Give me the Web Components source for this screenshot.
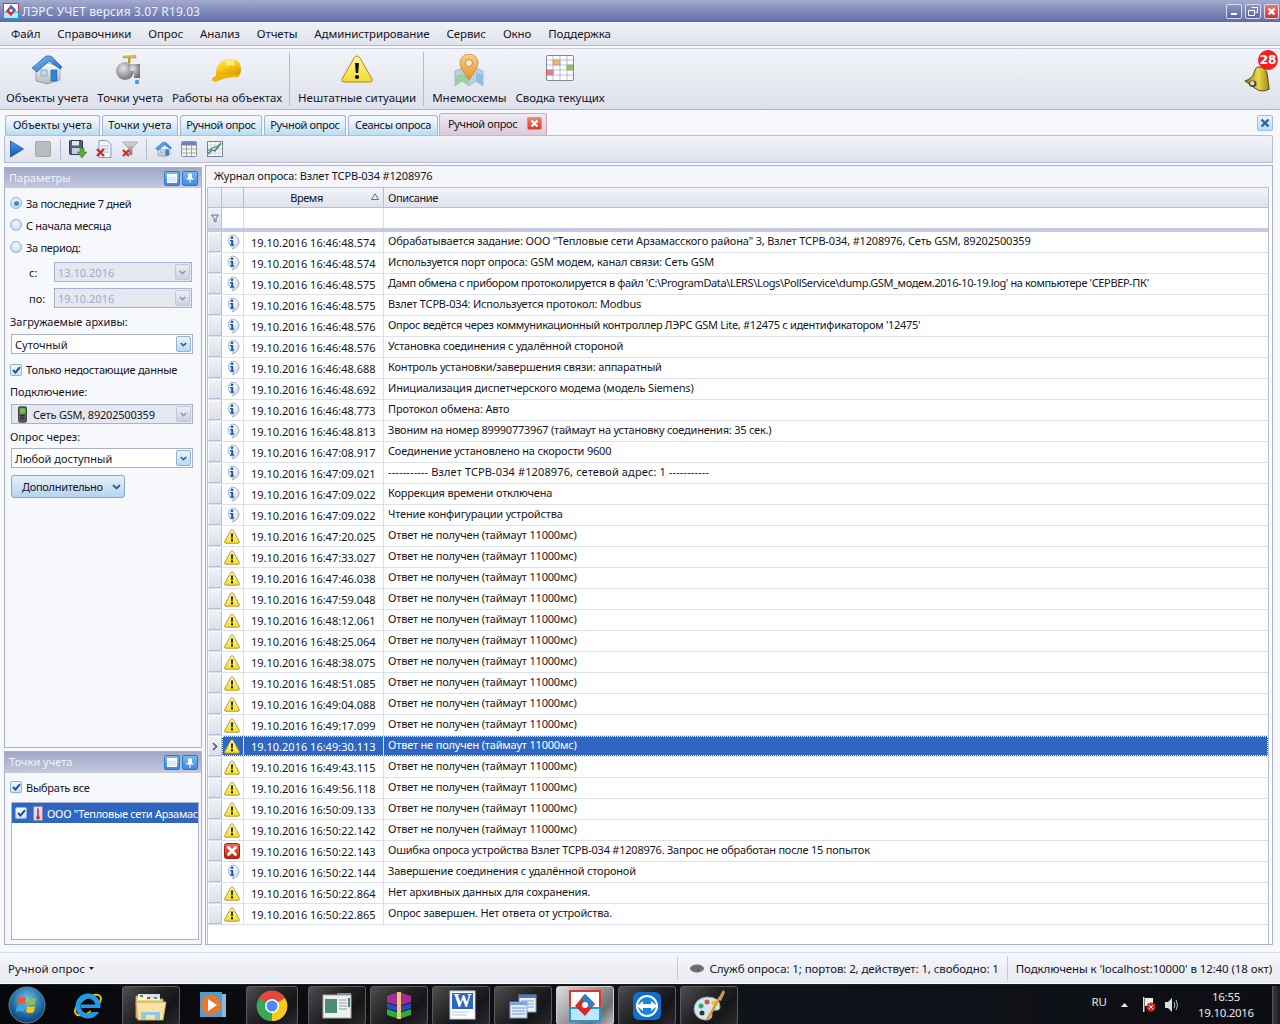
<!DOCTYPE html>
<html lang="ru">
<head>
<meta charset="utf-8">
<title>ЛЭРС УЧЕТ</title>
<style>
  html, body { margin: 0; padding: 0; background: #f7f8fc; }
  body { width: 1280px; height: 1024px; overflow: hidden; font: 11px "Noto Sans", sans-serif; color: #15151f; }
</style>
</head>
<body>
<app-window>
  <title-bar>ЛЭРС УЧЕТ версия 3.07 R19.03</title-bar>
  <menu-bar items="Файл|Справочники|Опрос|Анализ|Отчеты|Администрирование|Сервис|Окно|Поддержка"></menu-bar>
  <ribbon-bar></ribbon-bar>
  <tab-strip></tab-strip>
  <work-area>
    <params-panel></params-panel>
    <log-grid></log-grid>
  </work-area>
  <status-bar></status-bar>
  <task-bar></task-bar>
</app-window>

<script>
// icons, all hand drawn, size is set by the caller
const svg = (w, h, vb, body) => `<svg width="${w}" height="${h}" viewBox="0 0 ${vb}" style="display:block;flex:none">${body}</svg>`;

const icons = {
  house: (s = 32) => svg(s, s, '32 32', `
    <defs><linearGradient id="hw" x1="0" y1="0" x2="0" y2="1"><stop offset="0" stop-color="#fff"/><stop offset="1" stop-color="#b4b8bf"/></linearGradient>
    <linearGradient id="hr" x1="0" y1="0" x2="1" y2="1"><stop offset="0" stop-color="#7cc0f4"/><stop offset="1" stop-color="#1b66c4"/></linearGradient></defs>
    <path d="M5 14 L5 27 L16 30 L29 26 L29 13 L17 9 Z" fill="url(#hw)" stroke="#8a8f98" stroke-width=".7"/>
    <path d="M1 14 L15 2 L20 2 L31 13 L29 15 L18 7 L6 18 Z" fill="url(#hr)" stroke="#1f5fae" stroke-width=".7"/>
    <rect x="20" y="16" width="6" height="11" fill="#2a86d6" stroke="#1a5ea8" stroke-width=".6"/>
    <rect x="10" y="16" width="6" height="6" fill="#bcd9ee" stroke="#6f8fa8" stroke-width=".6"/>`),
  tap: () => svg(32, 32, '32 32', `
    <defs><radialGradient id="tp" cx=".4" cy=".35" r=".7"><stop offset="0" stop-color="#e4e4ea"/><stop offset="1" stop-color="#6e6e78"/></radialGradient></defs>
    <circle cx="11" cy="17" r="9" fill="url(#tp)"/>
    <path d="M14 10 H26 V24 H20 V17 H14Z" fill="url(#tp)"/>
    <rect x="14" y="3" width="2.500" height="6" fill="#b9a040"/><path d="M9 2 L22 1.500 L22 4 L9 4Z" fill="#d9c24a" stroke="#9b8528" stroke-width=".4"/>
    <circle cx="23" cy="28" r="2.200" fill="#3a9bf0"/>`),
  helmet: () => svg(32, 32, '32 32', `
    <defs><linearGradient id="hl" x1="0" y1="0" x2=".5" y2="1"><stop offset="0" stop-color="#ffec78"/><stop offset=".55" stop-color="#f8cb14"/><stop offset="1" stop-color="#e09f04"/></linearGradient></defs>
    <path d="M5 22 Q4 6 19 5 Q30 5 30 16 Q30 20 27 22 Q15 20 5 22Z" fill="url(#hl)"/>
    <path d="M1 26 Q1 23 5 22 Q15 19 27 21 Q30 22 27 23 Q15 23 7 27 Q2 29 1 26Z" fill="#eeb40a"/>
    <path d="M14 7 Q19 5 23 6 L24 12 Q19 10 15 12Z" fill="#fff09a" opacity=".8"/>`),
  warnBig: () => svg(32, 32, '32 32', `
    <defs><linearGradient id="wb" x1="0" y1="0" x2="0" y2="1"><stop offset="0" stop-color="#fff7a0"/><stop offset="1" stop-color="#f4d92e"/></linearGradient></defs>
    <path d="M16 2 Q18 2 19 4 L31 25 Q32 28 29 28 L3 28 Q0 28 1 25 L13 4 Q14 2 16 2Z" fill="url(#wb)" stroke="#b08a1a" stroke-width="1"/>
    <path d="M14 9 h4 l-.8 10 h-2.400z" fill="#111"/><circle cx="16" cy="23" r="2.100" fill="#111"/>`),
  map: () => svg(32, 32, '32 32', `
    <path d="M2 17 L9 14 L16 18 L23 14 L30 17 L30 32 L23 27 L16 32 L9 27 L2 32 Z" fill="#b9d2e6" stroke="#8aa3b8" stroke-width=".6"/>
    <path d="M2 23 L9 20 L16 24 L16 32 L9 27 L2 32Z" fill="#9fcf9a"/><path d="M23 18 L30 21 L30 32 L23 27Z" fill="#8fbfe0"/>
    <defs><linearGradient id="pn" x1="0" y1="0" x2="0" y2="1"><stop offset="0" stop-color="#fbd08a"/><stop offset="1" stop-color="#e8912c"/></linearGradient></defs>
    <path d="M16 26 Q7 14 7 9 A9 9 0 0 1 25 9 Q25 14 16 26Z" fill="url(#pn)" stroke="#c87c24" stroke-width=".7"/>
    <circle cx="16" cy="9" r="3.500" fill="#f3eee0" stroke="#b8802c" stroke-width=".8"/>`),
  sheet: () => svg(30, 30, '30 30', `
    <rect x="1.500" y="1.500" width="27" height="25" rx="1.500" fill="#fff" stroke="#7d86a8"/>
    <rect x="8" y="6" width="7" height="5" fill="#f2bb63" stroke="#c98d38" stroke-width=".6"/>
    <rect x="22" y="11" width="6.500" height="5" fill="#93c650" stroke="#6d9c34" stroke-width=".6"/>
    <rect x="1.500" y="16" width="7" height="5" fill="#ec7a70" stroke="#c8554a" stroke-width=".6"/>
    <path d="M8 2V26M15 2V26M22 2V26M2 6H28M2 11H28M2 16H28M2 21H28" stroke="#a5abcb" stroke-width=".8" fill="none"/>`),
  bell: () => svg(28, 30, '30 30', `
    <defs><linearGradient id="bl" x1="0" y1="0" x2="1" y2="0"><stop offset="0" stop-color="#8a7410"/><stop offset=".55" stop-color="#ecd84a"/><stop offset="1" stop-color="#a08a18"/></linearGradient></defs>
    <path d="M16 2 Q25 2 26 10 L28 26 Q20 30 13 25 L2 17 Q10 15 12 8 Q13 3 16 2Z" fill="url(#bl)" stroke="#4e4208" stroke-width="1"/>
    <ellipse cx="10.500" cy="20" rx="4" ry="3.500" fill="#444"/><circle cx="10" cy="19.500" r="2.300" fill="#ddd"/>`),
  play: () => svg(16, 18, '16 18', `
    <defs><linearGradient id="pl" x1="0" y1="0" x2="0" y2="1"><stop offset="0" stop-color="#46a2ea"/><stop offset="1" stop-color="#1156b8"/></linearGradient></defs>
    <path d="M1.500 1 L14.500 9 L1.500 17Z" fill="url(#pl)" stroke="#164f9c" stroke-width=".8"/>`),
  stop: () => svg(16, 16, '16 16', `<rect x=".5" y=".5" width="15" height="15" rx="1.500" fill="#bbbcc2" stroke="#a2a3ab"/>`),
  save: () => svg(18, 18, '18 18', `
    <rect x=".5" y=".5" width="13" height="14" rx="1" fill="#4f6079" stroke="#2f3a4e"/><rect x="3" y="1" width="7" height="4.500" fill="#dfe4ee"/><rect x="3" y="8" width="8" height="6" fill="#c8cedc"/>
    <path d="M11 8 h4 v4 h3 l-5 6 l-5 -6 h3z" fill="#57ae3c" stroke="#34802a" stroke-width=".6"/>`),
  docx: () => svg(16, 18, '16 18', `
    <path d="M3 .5 H11 L15 4.500 V17.500 H3Z" fill="#f3f5fb" stroke="#8b97b8"/><path d="M5 6H13M5 9H13M5 12H13" stroke="#a9b7d3"/>
    <path d="M1 9 L8 16 M8 9 L1 16" stroke="#d42a1e" stroke-width="2.400"/>`),
  funnelx: () => svg(16, 18, '16 18', `
    <defs><linearGradient id="fn" x1="0" y1="0" x2="0" y2="1"><stop offset="0" stop-color="#dedede"/><stop offset="1" stop-color="#787878"/></linearGradient></defs>
    <path d="M.5 2 H15.500 L10 8.500 V15 L7 14 V8.500Z" fill="url(#fn)" stroke="#777" stroke-width=".5"/>
    <path d="M1 10 L7 16 M7 10 L1 16" stroke="#d42a1e" stroke-width="2.200"/>`),
  table: () => svg(16, 16, '16 16', `
    <rect x=".5" y=".5" width="15" height="15" rx="1" fill="#f4f4f2" stroke="#8c92a8"/><rect x="1" y="1" width="14" height="3.500" fill="#6f84b8"/>
    <path d="M1 8H15M1 12H15M5.500 4V15M10.500 4V15" stroke="#a9a79a" fill="none"/>`),
  chart: () => svg(16, 16, '16 16', `
    <rect x=".5" y=".5" width="15" height="15" fill="#fdfdf8" stroke="#7a8094"/><path d="M4 1V15M8 1V15M12 1V15M1 4H15M1 8H15M1 12H15" stroke="#c3c6cc" stroke-width=".7"/>
    <path d="M1 13 L5 9 L8 10 L14 2" stroke="#2f66c2" stroke-width="1.300" fill="none"/><path d="M1 10 L5 7 L9 6 L14 3" stroke="#3ca83c" stroke-width="1.300" fill="none"/>`),
  info: () => svg(16, 16, '16 16', `
    <defs><radialGradient id="inf" cx=".4" cy=".3" r=".8"><stop offset="0" stop-color="#fff"/><stop offset="1" stop-color="#c5d2e4"/></radialGradient></defs>
    <path d="M8 1 A7 6.500 0 0 1 14 11 Q12 14 8 15 Q10 13.500 9.500 13 A7 6.500 0 0 1 8 1Z" fill="url(#inf)" stroke="#98a8bf" stroke-width=".8"/>
    <circle cx="8" cy="3.800" r="1.400" fill="#1b57b0"/><path d="M6 6 h3.200 v4.500 h1 v1.300 h-4 v-1.300 h1 v-3.200 h-1.200z" fill="#1b57b0"/>`),
  warn: () => svg(16, 15, '16 15', `
    <defs><linearGradient id="wn" x1="0" y1="0" x2="0" y2="1"><stop offset="0" stop-color="#fff9b0"/><stop offset="1" stop-color="#f6e020"/></linearGradient></defs>
    <path d="M8 .8 Q8.800 .8 9.300 1.700 L15.300 12.500 Q15.800 14 14.300 14.200 L1.700 14.200 Q.2 14 .7 12.500 L6.700 1.700 Q7.200 .8 8 .8Z" fill="url(#wn)" stroke="#a98c30" stroke-width=".9"/>
    <path d="M7 4.500 h2 l-.4 5 h-1.200z" fill="#111"/><rect x="7" y="10.300" width="2" height="2" fill="#111"/>`),
  error: () => svg(16, 16, '16 16', `
    <defs><linearGradient id="er" x1="0" y1="0" x2="0" y2="1"><stop offset="0" stop-color="#f2725a"/><stop offset="1" stop-color="#c01c10"/></linearGradient></defs>
    <rect x=".5" y=".5" width="15" height="15" rx="2" fill="url(#er)" stroke="#a62015"/>
    <path d="M4.500 4.500 L11.500 11.500 M11.500 4.500 L4.500 11.500" stroke="#fff" stroke-width="2.800" stroke-linecap="round"/>`),
  thermo: () => svg(10, 17, '12 18', `
    <rect x=".5" y=".5" width="11" height="17" fill="#d8dcec" stroke="#7d86a8"/><rect x="5" y="3" width="2" height="10" fill="#d03028"/><circle cx="6" cy="14" r="2.200" fill="#d03028"/>`),
  phone: () => svg(9, 17, '10 18', `
    <rect x=".5" y=".5" width="9" height="17" rx="1.500" fill="#5d5f60" stroke="#333"/><rect x="2" y="2" width="6" height="6" fill="#68c43c"/><path d="M2.500 10H7.500M2.500 12H7.500M2.500 14H7.500" stroke="#222"/>`),
  logo: (s = 16) => svg(s, s, '16 16', `
    <rect x=".5" y=".5" width="15" height="15" fill="#fff" stroke="#e03530"/><rect x="1" y="9" width="14" height="6" fill="#bfe6f7"/><rect x=".5" y="9" width="15" height="6.500" fill="none" stroke="#1e9ad6"/>
    <path d="M8 2 L13 7 L8 13 L3 8Z" fill="#d22a26"/><path d="M8 2 L13 7 L10.500 9 L6 4Z" fill="#2f7fd0"/><circle cx="8" cy="7.500" r="1.500" fill="#fff"/>`)
};

class Base extends HTMLElement {
  mount(css, html) {
    this.attachShadow({ mode: 'open' });
    this.shadowRoot.innerHTML = `<style>${css}</style>${html}`;
  }
}

customElements.define('app-window', class extends Base {
  constructor() {
    super();
    this.mount(`:host { display:flex; flex-direction:column; width:1280px; height:1024px; background:#f7f8fc; }`, `<slot></slot>`);
  }
});

customElements.define('title-bar', class extends Base {
  constructor() {
    super();
    this.mount(`
      :host { display:flex; align-items:center; height:22px; flex:none; padding-left:3px; color:#eef0f8; font-size:12px;
              background:linear-gradient(#a3abcf,#5e6ba6); }
      .txt { margin-left:3px; letter-spacing:.1px; }
      .btns { margin-left:auto; display:flex; gap:3px; margin-right:1px; }
      .b { width:14px; height:13px; border:1px solid #d6daea; border-radius:2px; background:linear-gradient(#8b96c2,#5a68a3); display:flex; align-items:center; justify-content:center; }
      .x { background:linear-gradient(#f0786c,#d43028); width:13px; }`,
      `${icons.logo(16)}<span class="txt"><slot></slot></span>
      <div class="btns">
        <div class="b">${svg(8, 8, '8 8', '<rect x="1" y="6" width="6" height="2" fill="#fff"/>')}</div>
        <div class="b">${svg(10, 9, '10 9', '<path d="M3.500 .5h6v5h-2M.5 3.500h6v5h-6z" fill="none" stroke="#fff"/>')}</div>
        <div class="b x">${svg(9, 9, '9 9', '<path d="M1.500 1.500L7.500 7.500M7.500 1.500L1.500 7.500" stroke="#fff" stroke-width="2.400"/>')}</div>
      </div>`);
  }
});

customElements.define('menu-bar', class extends Base {
  connectedCallback() {
    if (this.shadowRoot) return;
    const items = this.getAttribute('items').split('|').map(t => `<span>${t}</span>`).join('');
    this.mount(`
      :host { display:flex; align-items:center; height:23px; padding-bottom:0; flex:none; gap:17px; padding-left:11px; margin-bottom:2px; font-size:11.5px; letter-spacing:-.1px;
              background:linear-gradient(#f1f2f7,#e0e3ee); border-bottom:1px solid #aeb4d2; }`, items);
  }
});

customElements.define('ribbon-btn', class extends Base {
  constructor() {
    super();
    this.mount(`
      :host { display:flex; flex-direction:column; align-items:center; white-space:nowrap; font-size:11.5px; }
      .ic { height:34px; margin-top:4px; display:flex; align-items:flex-start; }
      .t { margin-top:2px; line-height:16px; }`,
      `<div class="ic"><slot name="icon"></slot></div><div class="t"><slot></slot></div>`);
  }
});

customElements.define('ribbon-bar', class extends Base {
  constructor() {
    super();
    const btn = (ic, t) => `<ribbon-btn><span slot="icon">${ic}</span>${t}</ribbon-btn>`;
    this.mount(`
      :host { position:relative; display:flex; flex:none; gap:9px; padding:1px 0 0 6px; box-sizing:border-box; height:62px; letter-spacing:-.04px;
              background:linear-gradient(#f3f4f9,#dee1ec); border-top:1px solid #c6cbe0; border-bottom:1px solid #aeb4d2; }
      .sep { width:1px; margin:2px -1px 3px -2px; background:#b4bad5; }
      .bell { position:absolute; right:9px; top:15px; }
      .badge { position:absolute; right:2px; top:1px; width:20px; height:20px; border-radius:50%; background:#f4201c; color:#fff;
               font:bold 12px/20px "DejaVu Sans",sans-serif; text-align:center; }`,
      btn(icons.house(), 'Объекты учета') + btn(icons.tap(), 'Точки учета') + btn(icons.helmet(), 'Работы на объектах') +
      `<div class="sep"></div>` + btn(icons.warnBig(), 'Нештатные ситуации') +
      `<div class="sep"></div>` + btn(icons.map(), 'Мнемосхемы') + btn(icons.sheet(), 'Сводка текущих') +
      `<div class="bell">${icons.bell()}</div><div class="badge">28</div>`);
  }
});

customElements.define('tab-strip', class extends Base {
  constructor() {
    super();
    const tabs = [['Объекты учета', 95, 0], ['Точки учета', 76, 0], ['Ручной опрос', 82, -.35], ['Ручной опрос', 82, -.35], ['Сеансы опроса', 90, -.35]];
    this.mount(`
      :host { display:flex; align-items:flex-end; height:25px; flex:none; padding-left:5px; gap:2px; background:#f7f8fc; white-space:nowrap; }
      .tab { height:20px; padding-bottom:3px; box-sizing:border-box; display:flex; align-items:center; justify-content:center; border:1px solid #a9b0d0; border-bottom:0; border-radius:3px 3px 0 0;
             background:linear-gradient(#f6f9fe 0,#e3f0fb 40%,#b9dcf5 100%); }
      .on { height:22px; padding-bottom:2px; margin-left:-1px; width:108px; justify-content:flex-start; padding-left:8px; background:linear-gradient(#f0e9f2,#dcc9dd); border-color:#cfa8c8; gap:10px; letter-spacing:-.35px; }
      .cl { width:15px; height:13px; border-radius:2px; background:linear-gradient(#f2826e,#e2342a); border:1px solid #e88; box-sizing:border-box; display:flex; align-items:center; justify-content:center; }
      .close { margin:0 7px 4px auto; width:16px; height:16px; box-sizing:border-box; border:1px solid #9cc0e4; border-radius:2px; background:linear-gradient(#eaf4fd,#b9dcf5); display:flex; align-items:center; justify-content:center; }`,
      tabs.map(([t, w, ls]) => `<div class="tab" style="width:${w}px;letter-spacing:${ls}px">${t}</div>`).join('') +
      `<div class="tab on">Ручной опрос<span class="cl">${svg(9, 9, '9 9', '<path d="M1.500 1.500L7.500 7.500M7.500 1.500L1.500 7.500" stroke="#fff" stroke-width="2.200"/>')}</span></div>
       <div class="close">${svg(10, 10, '10 10', '<path d="M1.500 1.500L8.500 8.500M8.500 1.500L1.500 8.500" stroke="#2a62a8" stroke-width="2.400"/>')}</div>`);
  }
});

customElements.define('work-area', class extends Base {
  constructor() {
    super();
    const ic = i => `<span class="i">${i}</span>`;
    this.mount(`
      :host { flex:1; min-height:0; display:flex; flex-direction:column; padding:0 7px 7px 4px; background:#f7f8fc; border-bottom:1px solid #d8dbe8; }
      .tools { display:flex; align-items:center; height:28px; box-sizing:border-box; flex:none; padding-left:0; border:1px solid #b7bdd8; border-radius:2px 2px 0 0; background:linear-gradient(#f1f2f8,#dfe2ed); margin-bottom:2px; }
      .i { width:26px; display:flex; justify-content:center; flex:none; }
      .i:first-child { margin-left:-1px; }
      .s { width:1px; height:21px; background:#b4bad5; margin:0 4px; flex:none; }
      .s2 { margin:0 3px; }
      .body { flex:1; min-height:0; display:flex; gap:3px; }`,
      `<div class="tools">${ic(icons.play())}${ic(icons.stop())}<span class="s"></span>${ic(icons.save())}${ic(icons.docx())}${ic(icons.funnelx())}<span class="s s2"></span>${ic(icons.house(17))}${ic(icons.table())}${ic(icons.chart())}</div>
       <div class="body"><slot></slot></div>`);
  }
});

customElements.define('dock-head', class extends Base {
  constructor() {
    super();
    this.mount(`
      :host { display:flex; align-items:center; height:20px; flex:none; padding-left:4px; color:#f2f3f9; font-size:11px; background:linear-gradient(#9fa7c8,#c4c9de); }
      .t { padding-bottom:2px; }
      .bs { margin-left:auto; display:flex; gap:2px; margin-right:3px; }
      .b { width:16px; height:15px; box-sizing:border-box; border:1px solid #2c78c8; border-radius:2px; background:linear-gradient(#7cb8ee,#3c8ade); display:flex; align-items:center; justify-content:center; }`,
      `<span class="t"><slot></slot></span><div class="bs">
        <div class="b">${svg(10, 9, '10 9', '<rect x=".5" y=".5" width="9" height="8" fill="#dcebfa" stroke="#fff"/><rect x="1" y="1" width="8" height="1.500" fill="#fff"/>')}</div>
        <div class="b">${svg(8, 10, '8 10', '<path d="M2 .5H6V5H7.500V6.500H4.500V10H3.500V6.500H.5V5H2Z" fill="#fff"/>')}</div></div>`);
  }
});

customElements.define('check-box', class extends Base {
  constructor() {
    super();
    this.mount(`
      :host { display:flex; align-items:center; gap:4px; white-space:nowrap; letter-spacing:-.25px; }
      .c { width:10px; height:10px; border:1px solid #8fb3d8; border-radius:2px; background:linear-gradient(#f3f8fd,#cfe2f4); flex:none; display:flex; align-items:center; justify-content:center; }`,
      `<span class="c">${svg(9, 8, '9 8', '<path d="M1 4 L3.500 6.500 L8 1.200" fill="none" stroke="#1f4f9c" stroke-width="2"/>')}</span><slot></slot>`);
  }
});

customElements.define('radio-opt', class extends Base {
  constructor() {
    super();
    this.mount(`
      :host { display:flex; align-items:center; gap:4px; white-space:nowrap; padding-left:5px; height:22px; letter-spacing:-.3px; }
      .r { width:10px; height:10px; border-radius:50%; border:1px solid #8fb3d8; background:radial-gradient(circle at 50% 35%,#f3f8fd,#b7d3ee); flex:none; display:flex; align-items:center; justify-content:center; }
      .d { width:5px; height:5px; border-radius:50%; background:#4d87c7; display:none; }
      :host([checked]) .d { display:block; }`,
      `<span class="r"><span class="d"></span></span><slot></slot>`);
  }
});

customElements.define('combo-box', class extends Base {
  constructor() {
    super();
    this.mount(`
      :host { display:flex; align-items:center; height:20px; box-sizing:border-box; border:1px solid #a9b0d0; background:#fff; padding-left:3px; margin-left:11px; margin-right:9px; gap:6px; }
      :host([disabled]) { background:#e6e8f1; color:#a2a8c6; }
      :host([plain]) { background:#e6e8f1; color:#15151f; padding-left:6px; letter-spacing:-.2px; }
      .arr { margin-left:auto; margin-right:1px; width:15px; height:16px; box-sizing:border-box; border:1px solid #8fb3d8; border-radius:2px; background:linear-gradient(#eaf3fb,#bcd7f0); display:flex; align-items:center; justify-content:center; }
      :host([disabled]) .arr, :host([plain]) .arr { background:linear-gradient(#eceef4,#cdd1e0); border-color:#c3c7d8; }
      path { stroke:#275fa5; }
      :host([disabled]) path, :host([plain]) path { stroke:#9096b4; }`,
      `<slot name="icon"></slot><slot></slot><span class="arr">${svg(7, 5, '9 6', '<path d="M1 1L4.500 4.500L8 1" fill="none" stroke-width="2"/>')}</span>`);
  }
});

customElements.define('params-panel', class extends Base {
  constructor() {
    super();
    this.mount(`
      :host { display:flex; flex-direction:column; gap:3px; width:198px; flex:none; margin-top:2px; }
      .dock { border:1px solid #a9b0d0; background:#f7f8fc; display:flex; flex-direction:column; box-sizing:border-box; }
      .top { flex:1; min-height:0; }
      .bottom { height:194px; flex:none; }
      .lbl { padding-left:5px; height:16px; line-height:16px; }
      .d { display:flex; align-items:center; height:20px; margin-bottom:6px; padding-left:24px; }
      .d span { width:25px; }
      .d combo-box { flex:1; margin:0 9px 0 0; }
      .list { margin:8px 2px 4px 6px; flex:1; border:1px solid #a9b0d0; background:#fff; overflow:hidden; }
      .sel { height:20px; background:#2f66c2; color:#fff; display:flex; align-items:center; padding-left:3px; white-space:nowrap; overflow:hidden; letter-spacing:-.3px; }
      .sel svg { margin-left:6px; }
      .sel span { margin-left:4px; }
      .more { margin:7px 0 0 6px; width:114px; height:23px; box-sizing:border-box; border:1px solid #7fa9d4; border-radius:3px; background:linear-gradient(#e8f1fa,#b5d3ef); display:flex; align-items:center; padding-left:10px; gap:9px; letter-spacing:-.3px; }`,
      `<div class="dock top">
        <dock-head>Параметры</dock-head>
        <div style="height:4px"></div>
        <radio-opt checked>За последние 7 дней</radio-opt>
        <radio-opt>С начала месяца</radio-opt>
        <radio-opt>За период:</radio-opt>
        <div style="height:4px"></div>
        <div class="d"><span>с:</span><combo-box disabled>13.10.2016</combo-box></div>
        <div class="d"><span>по:</span><combo-box disabled>19.10.2016</combo-box></div>
        <div class="lbl" style="margin-bottom:4px">Загружаемые архивы:</div>
        <combo-box style="margin-left:6px;margin-right:8px">Суточный</combo-box>
        <check-box style="margin:8px 0 7px 5px">Только недостающие данные</check-box>
        <div class="lbl" style="margin-bottom:4px">Подключение:</div>
        <combo-box plain style="margin-left:6px;margin-right:8px"><span slot="icon">${icons.phone()}</span>Сеть GSM, 89202500359</combo-box>
        <div class="lbl" style="margin:5px 0 3px">Опрос через:</div>
        <combo-box style="margin-left:6px;margin-right:8px">Любой доступный</combo-box>
        <div class="more">Дополнительно ${svg(9, 6, '9 6', '<path d="M1 1L4.500 4.500L8 1" fill="none" stroke="#275fa5" stroke-width="1.800"/>')}</div>
      </div>
      <div class="dock bottom">
        <dock-head style="height:21px">Точки учета</dock-head>
        <check-box style="margin:7px 0 0 5px;height:14px">Выбрать все</check-box>
        <div class="list"><div class="sel"><check-box></check-box>${icons.thermo()}<span>ООО "Тепловые сети Арзамас</span></div></div>
      </div>`);
  }
});

customElements.define('log-row', class extends Base {
  connectedCallback() {
    if (this.shadowRoot) return;
    const kind = this.getAttribute('kind');
    const cur = this.hasAttribute('current');
    this.mount(`
      :host { display:flex; height:21px; flex:none; box-sizing:border-box; border-bottom:1px solid #dcdff0; background:#fff; }
      :host([current]) { color:#fff; }
      .ind { width:14px; flex:none; box-sizing:border-box; background:linear-gradient(#f0f1f7,#dcdfeb); border:1px solid #f8f9fc; border-right-color:#b9bed6; border-bottom-color:#b9bed6; display:flex; align-items:center; justify-content:center; }
      .main { flex:1; display:flex; min-width:0; }
      :host([current]) .main { background:#2f66c2; outline:1px dotted #fff; outline-offset:-1px; }
      .ic { width:22px; flex:none; display:flex; align-items:center; justify-content:center; box-sizing:border-box; padding-right:1px; border-right:1px solid #dcdff0; }
      .time { width:140px; flex:none; box-sizing:border-box; padding:2px 0 0 7px; line-height:18px; border-right:1px solid #dcdff0; }
      .txt { flex:1; padding:0 0 0 4px; line-height:18px; white-space:nowrap; letter-spacing:-.18px; }`,
      `<div class="ind">${cur ? svg(6, 9, '6 9', '<path d="M1 1L4.500 4.500L1 8" fill="none" stroke="#556" stroke-width="1.600"/>') : ''}</div>
       <div class="main"><div class="ic">${icons[kind]()}</div><div class="time">${this.getAttribute('time')}</div><div class="txt"><slot></slot></div></div>`);
  }
});

customElements.define('log-grid', class extends Base {
  constructor() {
    super();
    const d = '19.10.2016 ';
    const warnMsg = 'Ответ не получен (таймаут 11000мс)';
    // 4th value: own letter spacing where the font runs wider than the reference
    const rows = [
      ['info', '16:46:48.574', 'Обрабатывается задание: ООО "Тепловые сети Арзамасского района" 3, Взлет ТСРВ-034, #1208976, Сеть GSM, 89202500359', -.16],
      ['info', '16:46:48.574', 'Используется порт опроса: GSM модем, канал связи: Сеть GSM'],
      ['info', '16:46:48.575', "Дамп обмена с прибором протоколируется в файл 'C:\\ProgramData\\LERS\\Logs\\PollService\\dump.GSM_модем.2016-10-19.log' на компьютере 'СЕРВЕР-ПК'", -.37],
      ['info', '16:46:48.575', 'Взлет ТСРВ-034: Используется протокол: Modbus'],
      ['info', '16:46:48.576', "Опрос ведётся через коммуникационный контроллер ЛЭРС GSM Lite, #12475 с идентификатором '12475'", -.31],
      ['info', '16:46:48.576', 'Установка соединения с удалённой стороной'],
      ['info', '16:46:48.688', 'Контроль установки/завершения связи: аппаратный'],
      ['info', '16:46:48.692', 'Инициализация диспетчерского модема (модель Siemens)'],
      ['info', '16:46:48.773', 'Протокол обмена: Авто'],
      ['info', '16:46:48.813', 'Звоним на номер 89990773967 (таймаут на установку соединения: 35 сек.)', -.22],
      ['info', '16:47:08.917', 'Соединение установлено на скорости 9600'],
      ['info', '16:47:09.021', '----------- Взлет ТСРВ-034 #1208976, сетевой адрес: 1 -----------', .12],
      ['info', '16:47:09.022', 'Коррекция времени отключена'],
      ['info', '16:47:09.022', 'Чтение конфигурации устройства'],
      ...['16:47:20.025', '16:47:33.027', '16:47:46.038', '16:47:59.048', '16:48:12.061', '16:48:25.064', '16:48:38.075', '16:48:51.085', '16:49:04.088', '16:49:17.099', '16:49:30.113', '16:49:43.115', '16:49:56.118', '16:50:09.133', '16:50:22.142'].map(t => ['warn', t, warnMsg]),
      ['error', '16:50:22.143', 'Ошибка опроса устройства Взлет ТСРВ-034 #1208976. Запрос не обработан после 15 попыток', -.23],
      ['info', '16:50:22.144', 'Завершение соединения с удалённой стороной'],
      ['warn', '16:50:22.864', 'Нет архивных данных для сохранения.'],
      ['warn', '16:50:22.865', 'Опрос завершен. Нет ответа от устройства.']
    ];
    const rowsHtml = rows.map(([k, t, m, ls]) => `<log-row kind="${k}" time="${d + t}"${t === '16:49:30.113' ? ' current' : ''}><span${ls ? ` style="letter-spacing:${ls}px"` : ''}>${m}</span></log-row>`).join('');
    this.mount(`
      :host { flex:1; min-width:0; display:flex; flex-direction:column; border:1px solid #a9b0d0; background:#fff; box-sizing:border-box; }
      .cap { height:19px; padding:0 0 2px 8px; flex:none; display:flex; align-items:center; background:#f4f5fa; letter-spacing:-.15px; }
      .grid { flex:1; min-height:0; display:flex; flex-direction:column; margin:0 3px 0 1px; border:1px solid #b7bdd8; border-bottom:0; overflow:hidden; }
      .head { display:flex; height:19px; flex:none; background:linear-gradient(#f3f4f9,#dfe2ed); border-bottom:1px solid #b7bdd8; letter-spacing:-.4px; }
      .head div { box-sizing:border-box; border-right:1px solid #b7bdd8; display:flex; align-items:center; padding-bottom:1px; }
      .c0 { width:14px; flex:none; } .c1 { width:22px; flex:none; } .c2 { width:140px; flex:none; justify-content:center; padding-right:14px; position:relative; }
      .c3 { flex:1; padding-left:4px; border-right:0 !important; }
      .sort { position:absolute; right:4px; top:5px; }
      .filter { display:flex; height:20px; flex:none; }
      .filter div { box-sizing:border-box; border-right:1px solid #dcdff0; }
      .filter .c0 { background:linear-gradient(#f0f1f7,#dcdfeb); border-right-color:#b9bed6; display:flex; align-items:center; justify-content:center; }
      .split { height:4px; flex:none; background:#c5cae0; }`,
      `<div class="cap">Журнал опроса: Взлет ТСРВ-034 #1208976</div>
       <div class="grid">
         <div class="head"><div class="c0"></div><div class="c1"></div><div class="c2">Время<span class="sort">${svg(8, 7, '8 7', '<path d="M4 .8L7.500 6.500H.5Z" fill="none" stroke="#5a6ea8"/>')}</span></div><div class="c3">Описание</div></div>
         <div class="filter"><div class="c0">${svg(8, 9, '8 9', '<path d="M.5 1H7.500L5 4.500V8L3 7V4.500Z" fill="#dfe3f2" stroke="#5a6ea8"/>')}</div><div class="c1"></div><div class="c2"></div><div class="c3"></div></div>
         <div class="split"></div>
         ${rowsHtml}
       </div>`);
  }
});

customElements.define('status-bar', class extends Base {
  constructor() {
    super();
    this.mount(`
      :host { display:flex; align-items:center; height:30px; flex:none; font-size:11.5px; background:linear-gradient(#f6f7fb,#e7e9f2); }
      .mode { padding-left:8px; display:flex; align-items:center; gap:4px; }
      .sep { width:1px; height:24px; background:#c4c8da; }
      .a { margin-left:auto; }
      .s { display:flex; align-items:center; gap:5px; white-space:nowrap; letter-spacing:-.1px; }`,
      `<div class="mode">Ручной опрос ${svg(5, 3, '5 3', '<path d="M0 0H5L2.500 3Z" fill="#222"/>')}</div>
       <div class="sep a"></div>
       <div class="s" style="padding:0 8px 0 12px">${svg(14, 9, '14 9', '<ellipse cx="7" cy="4.500" rx="7" ry="4" fill="#6e6e70"/><rect x="7" y="5" width="2" height="2" fill="#d22"/><rect x="10" y="5" width="2" height="2" fill="#3a3"/>')}Служб опроса: 1; портов: 2, действует: 1, свободно: 1</div>
       <div class="sep"></div>
       <div class="s" style="padding:0 8px">Подключены к 'localhost:10000' в 12:40 (18 окт)</div>`);
  }
});

customElements.define('task-btn', class extends Base {
  constructor() {
    super();
    this.mount(`
      :host { width:58px; height:39px; flex:none; display:flex; align-items:center; justify-content:center; box-sizing:border-box; margin-top:1px; margin-right:4px;
              border:1px solid #5b5b5e; border-radius:3px; background:linear-gradient(135deg,#4d4d50,#232325 45%,#161618 70%,#2a2a2c); }
      :host([active]) { background:linear-gradient(135deg,#dfdfdf,#9c9c9c 45%,#6e6e6e 75%,#bbb); border-color:#cfcfcf; }`,
      `<slot></slot>`);
  }
});

customElements.define('task-bar', class extends Base {
  constructor() {
    super();
    const b = (x, a = '') => `<task-btn ${a}>${x}</task-btn>`;
    const orb = svg(38, 38, '38 38', `
      <defs><radialGradient id="or" cx=".5" cy=".35" r=".7"><stop offset="0" stop-color="#7cc7ea"/><stop offset=".6" stop-color="#1e6da8"/><stop offset="1" stop-color="#0c3258"/></radialGradient></defs>
      <circle cx="19" cy="19" r="18" fill="url(#or)" stroke="#6e7f8c"/>
      <path d="M10 12 Q14 10 18 12 L17 18 Q13 16 9 18Z" fill="#ef5a2a"/><path d="M20 12 Q24 14 28 12 L27 18 Q23 20 19 18Z" fill="#8cc63f"/>
      <path d="M9 20 Q13 18 17 20 L16 26 Q12 24 8 26Z" fill="#39a9e0"/><path d="M19 20 Q23 22 27 20 L26 26 Q22 28 18 26Z" fill="#fcc419"/>`);
    const ie = svg(32, 32, '32 32', `<ellipse cx="16" cy="16" rx="15" ry="7" transform="rotate(-35 16 16)" fill="none" stroke="#f2b90f" stroke-width="2"/>
      <circle cx="16" cy="17" r="10" fill="none" stroke="#1e9be8" stroke-width="5"/><rect x="9" y="15.500" width="15" height="3.500" fill="#1e9be8"/><rect x="19" y="19" width="9" height="4" fill="#000"/>`);
    const folder = svg(32, 32, '32 32', `<path d="M1 6 H13 L15 9 H28 V28 H1Z" fill="#f0d483" stroke="#b99a4a"/><rect x="3" y="4" width="22" height="6" fill="#fff" opacity=".85"/><rect x="5" y="5" width="3" height="2" fill="#3a3"/><rect x="12" y="7" width="3" height="2" fill="#d33"/><rect x="19" y="7" width="3" height="2" fill="#39c"/>
      <path d="M1 12 H31 L28 30 H3Z" fill="#f7e3a5" stroke="#c4a655"/><path d="M6 22 H25 V30 H20 V25 H11 V30 H6Z" fill="#8cc8ea"/>`);
    const media = svg(28, 28, '28 28', `<rect x="4" y="3" width="23" height="23" fill="#8eb8d8"/><rect x="1" y="1" width="22" height="25" fill="#5a9ac8"/><circle cx="12" cy="14" r="10" fill="#e8792c"/><path d="M9 8 L18 14 L9 20Z" fill="#fff"/>`);
    const chrome = svg(32, 32, '32 32', `<circle cx="16" cy="16" r="15" fill="#e04a3c"/><path d="M16 16 L29 8 A15 15 0 0 1 16 31Z" fill="#f8c919"/><path d="M16 16 L16 31 A15 15 0 0 1 3 8Z" fill="#3aa757"/><path d="M3 8 A15 15 0 0 1 29 8 L16 10Z" fill="#e04a3c"/><circle cx="16" cy="16" r="7" fill="#fff"/><circle cx="16" cy="16" r="5.500" fill="#4a8bf5"/>`);
    const win = svg(30, 28, '30 28', `<rect x="1" y="3" width="28" height="23" fill="#eef0ee" stroke="#aaa"/><rect x="15" y="1" width="14" height="2" fill="#889"/><rect x="3" y="7" width="12" height="14" fill="#4f8c78"/><path d="M17 8H25M17 11H25M17 14H25M17 17H25" stroke="#99a"/><rect x="26" y="6" width="2" height="9" fill="#3a8a7a"/>`);
    const rar = svg(30, 32, '30 32', `<path d="M3 6 L15 2 L27 6 V12 L15 16 L3 12Z" fill="#a32f8c"/><path d="M3 13 L15 17 L27 13 V18 L15 22 L3 18Z" fill="#2a48c8"/><path d="M3 19 L15 23 L27 19 V25 L15 29 L3 25Z" fill="#2fa83c"/><rect x="13" y="2" width="4" height="27" fill="#e8c877"/>`);
    const word = svg(32, 32, '32 32', `<rect x="5" y="1" width="25" height="28" fill="#fff" stroke="#b8c8e0"/><rect x="7" y="3" width="21" height="16" fill="#2a66c0"/><text x="17.500" y="17" text-anchor="middle" font-family="Liberation Serif" font-weight="700" font-size="18" fill="#fff">W</text><path d="M7 22H24M7 25H22" stroke="#bcd"/>`);
    const wins = svg(30, 28, '30 28', `<rect x="11" y="3" width="17" height="17" fill="#eef3fa" stroke="#7a9ac8"/><rect x="11" y="3" width="17" height="3" fill="#3f7ed0"/><rect x="2" y="10" width="17" height="16" fill="#e4ecf8" stroke="#7a9ac8"/><rect x="2" y="10" width="17" height="3" fill="#7aa6e0"/><path d="M4 16H17M4 19H17M4 22H17M13 9H26M20 12H26M20 15H26" stroke="#7a9ac8"/>`);
    const tv = svg(32, 32, '32 32', `<rect x="2" y="2" width="28" height="28" rx="6" fill="#0e6fd0"/><circle cx="16" cy="16" r="11" fill="#fff"/><circle cx="16" cy="16" r="9" fill="#1784e0"/><path d="M6 16 L12 11 V14 H20 V11 L26 16 L20 21 V18 H12 V21Z" fill="#fff"/>`);
    const palette = svg(34, 34, '34 34', `<path d="M2 20 Q3 9 15 8 Q28 8 28 18 Q28 22 22 21 Q18 21 20 26 Q20 31 13 31 Q3 30 2 20Z" fill="#d4e6f2" stroke="#8aa8bc"/><circle cx="9" cy="17" r="2.500" fill="#3aa857"/><circle cx="15" cy="13" r="2.500" fill="#d84f3a"/><circle cx="22" cy="14" r="2.500" fill="#ecc22a"/><circle cx="10" cy="24" r="2.500" fill="#333"/><path d="M15 31 L28 8" stroke="#e8951c" stroke-width="2.500"/><path d="M26 10 L31 1 L33 3 L29 12Z" fill="#c99662"/>`);
    this.mount(`
      :host { display:flex; height:40px; flex:none; margin-top:1px; background:linear-gradient(90deg,#07080b,#10131a 60%,#0c0e13); color:#e8e8e8; border-top:1px solid #1c1c1e; box-sizing:border-box; }
      .orb { width:54px; flex:none; display:flex; align-items:center; justify-content:center; }
      .ie { width:68px; flex:none; display:flex; align-items:center; justify-content:center; }
      .media { width:58px; flex:none; display:flex; align-items:center; justify-content:center; margin-right:4px; }
      .tray { margin-left:auto; display:flex; align-items:center; font-size:11.5px; }
      .ru { margin:0 14px 6px 0; }
      .clock { width:92px; margin-left:1px; text-align:center; line-height:16px; letter-spacing:-.3px; }
      .desk { width:7px; height:38px; background:linear-gradient(90deg,#3a3a3c,#1c1c1e); border-left:1px solid #555; }`,
      `<div class="orb">${orb}</div><div class="ie">${ie}</div>
       ${b(folder)}<div class="media">${media}</div><task-btn style="width:52px;margin-right:10px">${chrome}</task-btn>
       ${b(win)}${b(rar)}${b(word)}${b(wins)}${b(icons.logo(32), 'active')}${b(tv)}${b(palette)}
       <div class="tray">
         <span class="ru">RU</span>
         ${svg(7, 4, '7 4', '<path d="M3.500 0L7 4H0Z" fill="#eee"/>')}
         <span style="width:14px"></span>
         ${svg(14, 16, '14 16', '<rect x="1" y="0" width="1.500" height="15" fill="#ddd"/><rect x="3" y="1" width="8" height="8" fill="#eee"/><circle cx="9" cy="10" r="4.500" fill="#d22"/><path d="M7 8L11 12M11 8L7 12" stroke="#fff"/>')}
         <span style="width:9px"></span>
         ${svg(14, 14, '14 14', '<path d="M0 4H3L7 0V14L3 10H0Z" fill="#ddd"/><path d="M9 4Q11 7 9 10M11 2Q14 7 11 12" stroke="#bbb" fill="none"/>')}
         <div class="clock">16:55<br>19.10.2016</div>
         <div class="desk"></div>
       </div>`);
  }
});
</script>
</body>
</html>
